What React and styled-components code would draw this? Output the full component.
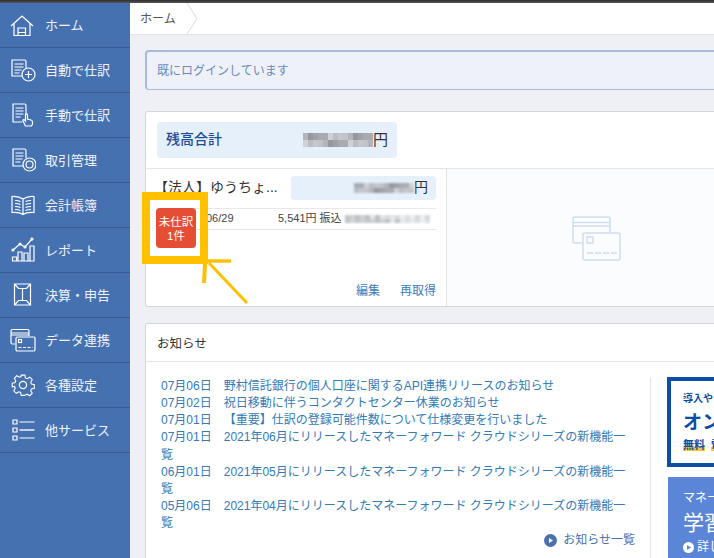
import styled, { createGlobalStyle } from 'styled-components';

const GlobalStyle = createGlobalStyle`
  html, body {
    margin: 0;
    padding: 0;
    height: 100%;
    overflow: hidden;
    background: #eff0f5;
  }
  body {
    font-family: "Liberation Sans", "Noto Sans CJK JP", sans-serif;
    font-size: 12px;
    line-height: 1.42857;
    color: #333;
  }
`;

const Page = styled.div`
  position: relative;
  width: 714px;
  height: 558px;
  overflow: hidden;
  display: flex;
  flex-direction: column;
`;

const TopEdge = styled.div`
  height: 3px;
  flex: none;
  background: linear-gradient(#2e2e2e, #555);
`;

const Columns = styled.div`
  flex: 1;
  display: flex;
  min-height: 0;
`;

const Sidebar = styled.nav`
  width: 130px;
  flex: none;
  background: #4671b1;
`;

const NavItem = styled.div`
  height: 45px;
  box-sizing: border-box;
  display: flex;
  align-items: center;
  padding-left: 10px;
  border-bottom: 1px solid #38598c;
  color: #eef2f9;
  font-size: 13px;
  & > svg {
    width: 26px;
    height: 26px;
    flex: none;
    margin-right: 9px;
    fill: none;
    stroke: #fff;
    stroke-width: 1.2;
  }
`;

const NavLabel = styled.span`
  padding-top: 2px;
`;

const Main = styled.main`
  width: 616px;
  flex: none;
  display: flex;
  flex-direction: column;
`;

const Breadcrumb = styled.div`
  height: 31px;
  flex: none;
  background: #fff;
  border-bottom: 1px solid #e4e4e4;
  display: flex;
  align-items: center;
  padding-left: 10px;
  color: #555;
  font-size: 12px;
  & > span {
    padding-top: 3px;
  }
  & > svg {
    width: 12px;
    height: 31px;
    margin-left: 10px;
    fill: none;
    stroke: #d8d8d8;
  }
`;

const Content = styled.div`
  padding: 15px;
  display: flex;
  flex-direction: column;
`;

const Alert = styled.div`
  height: 40px;
  box-sizing: border-box;
  display: flex;
  align-items: center;
  padding: 2px 0 0 10px;
  border: 1px solid #a6bcdf;
  border-left-width: 2px;
  border-top-width: 2px;
  border-radius: 4px;
  background: #eef1f7;
  color: #6a89bd;
  font-size: 12px;
  margin-bottom: 21px;
`;

const Card = styled.section`
  background: #fff;
  border: 1px solid #d4d5d8;
  border-radius: 3px;
  margin-bottom: 16px;
`;

const BalanceBar = styled.div`
  height: 57px;
  box-sizing: border-box;
  padding: 10px 11px;
  border-bottom: 1px solid #e6e6e6;
`;

const BalancePill = styled.div`
  width: 240px;
  height: 36px;
  box-sizing: border-box;
  display: flex;
  align-items: center;
  justify-content: space-between;
  padding: 0 9px;
  background: #e6f0fb;
  border-radius: 4px;
  color: #1d4c98;
  font-size: 14px;
  font-weight: 500;
`;

const Amount = styled.span`
  display: flex;
  align-items: center;
  color: #333;
  font-size: ${(p) => p.$size || 14}px;
  font-weight: 400;
`;

const Mosaic = styled.span`
  display: inline-grid;
  grid-template-columns: repeat(${(p) => p.$cells}, 5px);
  grid-auto-rows: ${(p) => p.$rowHeight}px;
  filter: blur(${(p) => p.$blur}px);
`;

const MosaicCell = styled.i`
  display: block;
`;

const Accounts = styled.div`
  display: grid;
  grid-template-columns: 301px 299px;
  height: 137px;
`;

const AccountPanel = styled.div`
  position: relative;
  border-right: 1px solid #e2e2e2;
  padding: 7px 10px 0 11px;
  display: flex;
  flex-direction: column;
`;

const AccountHead = styled.div`
  display: flex;
  align-items: center;
  justify-content: space-between;
  height: 24px;
  margin-bottom: 8px;
`;

const AccountName = styled.div`
  font-size: 14px;
  color: #333;
  white-space: nowrap;
  margin-left: -3px;
`;

const AccountPill = styled.div`
  width: 145px;
  height: 24px;
  box-sizing: border-box;
  display: flex;
  justify-content: flex-end;
  align-items: center;
  padding-right: 8px;
  background: #e6f0fb;
  border-radius: 4px;
`;

const TxRow = styled.div`
  height: 22px;
  box-sizing: border-box;
  border-top: 1px solid #e8e8e8;
  border-bottom: 1px solid #e8e8e8;
  display: flex;
  align-items: center;
  font-size: 11px;
  color: #444;
  padding-left: 49px;
`;

const TxDate = styled.span`
  width: 72px;
`;

const TxText = styled.span`
  margin-right: 3px;
  white-space: nowrap;
`;

const Badge = styled.div`
  position: absolute;
  left: 10px;
  top: 39px;
  width: 40px;
  height: 40px;
  box-sizing: border-box;
  padding-top: 2px;
  display: flex;
  flex-direction: column;
  align-items: center;
  justify-content: center;
  background: #e54d35;
  border-radius: 4px;
  color: #fff;
  font-size: 11.5px;
  line-height: 14px;
`;

const AccountActions = styled.div`
  margin-top: auto;
  height: 23px;
  display: flex;
  justify-content: flex-end;
  gap: 20px;
  color: #3d7cb8;
  font-size: 12px;
`;

const EmptyPanel = styled.div`
  background: #fbfcfe;
  display: flex;
  align-items: center;
  justify-content: center;
  & > svg {
    width: 50px;
    height: 46px;
    margin-top: 3px;
    fill: none;
    stroke: #cfddf1;
    stroke-width: 1.5;
  }
`;

const CardTitle = styled.h2`
  margin: 0;
  height: 38px;
  box-sizing: border-box;
  display: flex;
  align-items: center;
  padding: 4px 0 0 11px;
  font-size: 12.5px;
  font-weight: 400;
  color: #333;
  border-bottom: 1px solid #e4e4e4;
`;

const NewsBody = styled.div`
  display: grid;
  grid-template-columns: 505px 95px;
  padding-top: 15px;
  height: 200px;
`;

const NewsList = styled.div`
  padding: 1px 15px 0;
  border-right: 1px solid #e4e4e4;
`;

const NewsItem = styled.div`
  color: #337ab7;
  font-size: 12px;
`;

const NewsDate = styled.span`
  margin-right: 12px;
`;

const MoreLink = styled.div`
  display: flex;
  align-items: center;
  justify-content: flex-end;
  gap: 6px;
  color: #4a70ad;
  font-size: 12px;
  & > svg {
    width: 13px;
    height: 13px;
  }
`;

const Ads = styled.div`
  padding-left: 16px;
  display: flex;
  flex-direction: column;
  gap: 10px;
`;

const AdOutline = styled.div`
  width: 200px;
  height: 90px;
  box-sizing: border-box;
  border: 4px solid #0b4ea2;
  padding: 11px 0 0 12px;
  background: #fff;
  color: #0b4ea2;
  white-space: nowrap;
`;

const AdSmall = styled.div`
  font-size: 10px;
  font-weight: 700;
  line-height: 14px;
`;

const AdLarge = styled.div`
  font-size: 19px;
  font-weight: 700;
  line-height: 26px;
  margin-top: 4px;
`;

const AdMark = styled.span`
  font-size: 11px;
  font-weight: 700;
  line-height: 16px;
  margin-right: 6px;
  background: linear-gradient(transparent 65%, #ffc933 65%);
`;

const AdMarks = styled.div`
  margin-top: 1px;
`;

const AdFilled = styled.div`
  width: 200px;
  height: 90px;
  box-sizing: border-box;
  margin-left: 1px;
  padding: 12px 0 0 15px;
  background: #5b86d8;
  color: #fff;
  white-space: nowrap;
`;

const AdFilledSmall = styled.div`
  font-size: 12px;
  line-height: 18px;
  display: flex;
  align-items: center;
  gap: 3px;
  & > svg {
    width: 11px;
    height: 11px;
  }
`;

const AdFilledLarge = styled.div`
  font-size: 21px;
  line-height: 30px;
  margin: 1px 0 0;
`;

const Annotation = styled.svg`
  position: absolute;
  left: 0;
  top: 0;
  width: 714px;
  height: 558px;
  pointer-events: none;
  fill: none;
  stroke: #ffc000;
`;

const greys = ['#b4b5bc', '#9fa0a8', '#c6c7cd', '#a9aab1', '#d0d1d6', '#96979f', '#bcbdc3', '#c2c3c9', '#aaabb2'];
const fades = ['#cfd0d4', '#dcdde0', '#c4c5ca', '#e6e7e9', '#d5d6da', '#bfc0c5', '#eeeff0'];

const Blurred = ({ cells, rows = 2, rowHeight = 7, seed = 0, blur = 0.5, palette = greys }) => (
  <Mosaic $cells={cells} $rowHeight={rowHeight} $blur={blur}>
    {Array.from({ length: cells * rows }).map((_, i) => (
      <MosaicCell key={i} style={{ background: palette[(i * 4 + seed + (i % 3)) % palette.length] }} />
    ))}
  </Mosaic>
);

const navItems = [
  {
    label: 'ホーム',
    icon: (
      <svg viewBox="0 0 26 26">
        <path d="M1 14 12 4l11 10M4 11.500V23.500h16V11.500M8 23.500V16h7.500v7.500M8 20.500h7.500" />
      </svg>
    ),
  },
  {
    label: '自動で仕訳',
    icon: (
      <svg viewBox="0 0 26 26">
        <path d="M12 19H2V3h12.500c1 0 1.500 .5 1.500 1.500V11M4.500 7h9M4.500 10h9M4.500 13h7M4.500 16h5" />
        <circle cx="18.500" cy="17.500" r="6.500" />
        <path d="M18.500 14v7M15 17.500h7" />
      </svg>
    ),
  },
  {
    label: '手動で仕訳',
    icon: (
      <svg viewBox="0 0 26 26">
        <path d="M12 20H3V2h11.500c1 0 1.500 .5 1.500 1.500V13M5.500 6h8M5.500 9h8M5.500 12h8M5.500 15h5" />
        <path d="M15.500 24l-2.500-5c-.5-1 .5-2 1.500-1l1 1v-6c0-1.500 2-1.500 2 0v4l3.500 1c1 .3 1.500 1 1.500 2v2l-1 2z" />
      </svg>
    ),
  },
  {
    label: '取引管理',
    icon: (
      <svg viewBox="0 0 26 26">
        <path d="M13 19H3V2h11.500c1 0 1.500 .5 1.500 1.500V11M5.500 6h8M5.500 9h8M5.500 12h7M5.500 15h5" />
        <circle cx="19.500" cy="17.500" r="6.500" />
        <circle cx="19.500" cy="17.500" r="3.500" />
      </svg>
    ),
  },
  {
    label: '会計帳簿',
    icon: (
      <svg viewBox="0 0 26 26">
        <path d="M13 7C10 5 6 4 2 4.500v16c4-.5 8 0 11 2 3-2 7-2.500 11-2v-16C20 4 16 5 13 7zM13 7v15.500" />
        <path d="M5 8.500c2 0 4 .3 5.500 1M5 11.500c2 0 4 .3 5.500 1M5 14.500c2 0 4 .3 5.500 1M5 17.500c2 0 4 .3 5.500 1M21 8.500c-2 0-4 .3-5.500 1M21 11.500c-2 0-4 .3-5.500 1M21 14.500c-2 0-4 .3-5.500 1M21 17.500c-2 0-4 .3-5.500 1" />
      </svg>
    ),
  },
  {
    label: 'レポート',
    icon: (
      <svg viewBox="0 0 26 26">
        <path d="M2 24h22.500M2.500 24v-4h4v4M8 24v-9h4v9M14 24v-8h4v8M20 24V9h4v15" />
        <path d="M3 13l7-6 5 3 7-8" />
        <circle cx="3" cy="13" r="1" />
        <circle cx="10" cy="7" r="1" />
        <circle cx="15" cy="10" r="1" />
        <circle cx="22" cy="2" r="1" />
      </svg>
    ),
  },
  {
    label: '決算・申告',
    icon: (
      <svg viewBox="0 0 26 26">
        <path d="M4.500 2h16v21h-16zM4.500 2l4 4.500h8l4-4.500M4.500 23l4-4.500h8l4 4.500M12.500 6.500v12" />
      </svg>
    ),
  },
  {
    label: 'データ連携',
    icon: (
      <svg viewBox="0 0 26 26">
        <path d="M5 17H2.500C1.500 17 1 16.500 1 15.500V4c0-1 .5-1.500 1.500-1.500h15c1 0 1.500 .5 1.500 1.500v5M1 6h18M1 8h18" />
        <rect x="6" y="10" width="19" height="14" rx="1.200" />
        <rect x="8.500" y="12.500" width="3" height="3" />
        <path d="M8.500 20.500h14" strokeDasharray="3 1.500" />
      </svg>
    ),
  },
  {
    label: '各種設定',
    icon: (
      <svg viewBox="0 0 26 26">
        <path d="M11 2h4l.7 3.200 2 .8 2.800-1.700 2.800 2.800-1.700 2.800.8 2 3.200.7v4l-3.200.7-.8 2 1.700 2.800-2.800 2.800-2.800-1.700-2 .8L15 24.500h-4l-.7-3.200-2-.8-2.800 1.700-2.800-2.800 1.700-2.800-.8-2L1 15v-4l3.200-.7.8-2-1.700-2.800 2.800-2.800 2.800 1.700 2-.8z" transform="translate(1.300 1.300) scale(.9)" />
        <circle cx="13" cy="13" r="3.600" />
      </svg>
    ),
  },
  {
    label: '他サービス',
    icon: (
      <svg viewBox="0 0 26 26">
        <path d="M3 3h4v4H3zM3 11h4v4H3zM3 19h4v4H3zM9.500 5h15M9.500 21h15" />
        <path d="M9.500 13h15" strokeWidth="2" stroke="#c5d2e6" />
      </svg>
    ),
  },
];

const news = [
  ['07月06日', '野村信託銀行の個人口座に関するAPI連携リリースのお知らせ'],
  ['07月02日', '祝日移動に伴うコンタクトセンター休業のお知らせ'],
  ['07月01日', '【重要】仕訳の登録可能件数について仕様変更を行いました'],
  ['07月01日', '2021年06月にリリースしたマネーフォワード クラウドシリーズの新機能一覧'],
  ['06月01日', '2021年05月にリリースしたマネーフォワード クラウドシリーズの新機能一覧'],
  ['05月06日', '2021年04月にリリースしたマネーフォワード クラウドシリーズの新機能一覧'],
];

const App = () => {
  return (
    <Page>
      <GlobalStyle />
      <TopEdge />
      <Columns>
        <Sidebar>
          {navItems.map((item) => (
            <NavItem key={item.label}>
              {item.icon}
              <NavLabel>{item.label}</NavLabel>
            </NavItem>
          ))}
        </Sidebar>
        <Main>
          <Breadcrumb>
            <span>ホーム</span>
            <svg viewBox="0 0 12 31">
              <path d="M1 0l10 15.500L1 31" />
            </svg>
          </Breadcrumb>
          <Content>
            <Alert>既にログインしています</Alert>
            <Card>
              <BalanceBar>
                <BalancePill>
                  残高合計
                  <Amount $size={15}>
                    <Blurred cells={14} rows={2} rowHeight={7} blur={0.4} />円
                  </Amount>
                </BalancePill>
              </BalanceBar>
              <Accounts>
                <AccountPanel>
                  <AccountHead>
                    <AccountName>【法人】ゆうちょ...</AccountName>
                    <AccountPill>
                      <Amount>
                        <Blurred cells={12} rows={2} rowHeight={5} seed={3} blur={1} />円
                      </Amount>
                    </AccountPill>
                  </AccountHead>
                  <TxRow>
                    <TxDate>06/29</TxDate>
                    <TxText>5,541円 振込</TxText>
                    <Blurred cells={17} rows={2} rowHeight={4} seed={2} blur={1} palette={fades} />
                  </TxRow>
                  <Badge>
                    <span>未仕訳</span>
                    <span>1件</span>
                  </Badge>
                  <AccountActions>
                    <span>編集</span>
                    <span>再取得</span>
                  </AccountActions>
                </AccountPanel>
                <EmptyPanel>
                  <svg viewBox="0 0 50 46">
                    <path d="M11 27H3c-1.500 0-2-.5-2-2V3c0-1.500 .5-2 2-2h33c1.500 0 2 .5 2 2v14" />
                    <path d="M1 6.500h37M1 10h37" />
                    <rect x="11" y="17" width="37" height="27" rx="2" />
                    <rect x="15" y="21" width="6" height="6" />
                    <path d="M15 37h30" strokeDasharray="6 2" />
                  </svg>
                </EmptyPanel>
              </Accounts>
            </Card>
            <Card>
              <CardTitle>お知らせ</CardTitle>
              <NewsBody>
                <NewsList>
                  {news.map(([date, title], i) => (
                    <NewsItem key={i}>
                      <NewsDate>{date}</NewsDate>
                      {title}
                    </NewsItem>
                  ))}
                  <MoreLink>
                    <svg viewBox="0 0 13 13">
                      <circle cx="6.500" cy="6.500" r="6.500" fill="#4a70ad" />
                      <path d="M5 4l4 2.500L5 9z" fill="#fff" />
                    </svg>
                    お知らせ一覧
                  </MoreLink>
                </NewsList>
                <Ads>
                  <AdOutline>
                    <AdSmall>導入やご相談はこちら</AdSmall>
                    <AdLarge>オンライン</AdLarge>
                    <AdMarks>
                      <AdMark>無料</AdMark>
                      <AdMark>電話</AdMark>
                    </AdMarks>
                  </AdOutline>
                  <AdFilled>
                    <AdFilledSmall>マネーフォワード</AdFilledSmall>
                    <AdFilledLarge>学習コンテンツ</AdFilledLarge>
                    <AdFilledSmall>
                      <svg viewBox="0 0 11 11">
                        <circle cx="5.500" cy="5.500" r="5.500" fill="#fff" />
                        <path d="M4 3l4 2.500L4 8z" fill="#5b86d8" />
                      </svg>
                      詳しくはこちら
                    </AdFilledSmall>
                  </AdFilled>
                </Ads>
              </NewsBody>
            </Card>
          </Content>
        </Main>
      </Columns>
      <Annotation viewBox="0 0 714 558">
        <rect x="146" y="196" width="58" height="64" strokeWidth="8" />
        <path d="M247 303 209 263" strokeWidth="3" />
        <path d="M208 261h23" strokeWidth="3.500" />
        <path d="M205 264l-1 19" strokeWidth="4" />
      </Annotation>
    </Page>
  );
};

export default App;
